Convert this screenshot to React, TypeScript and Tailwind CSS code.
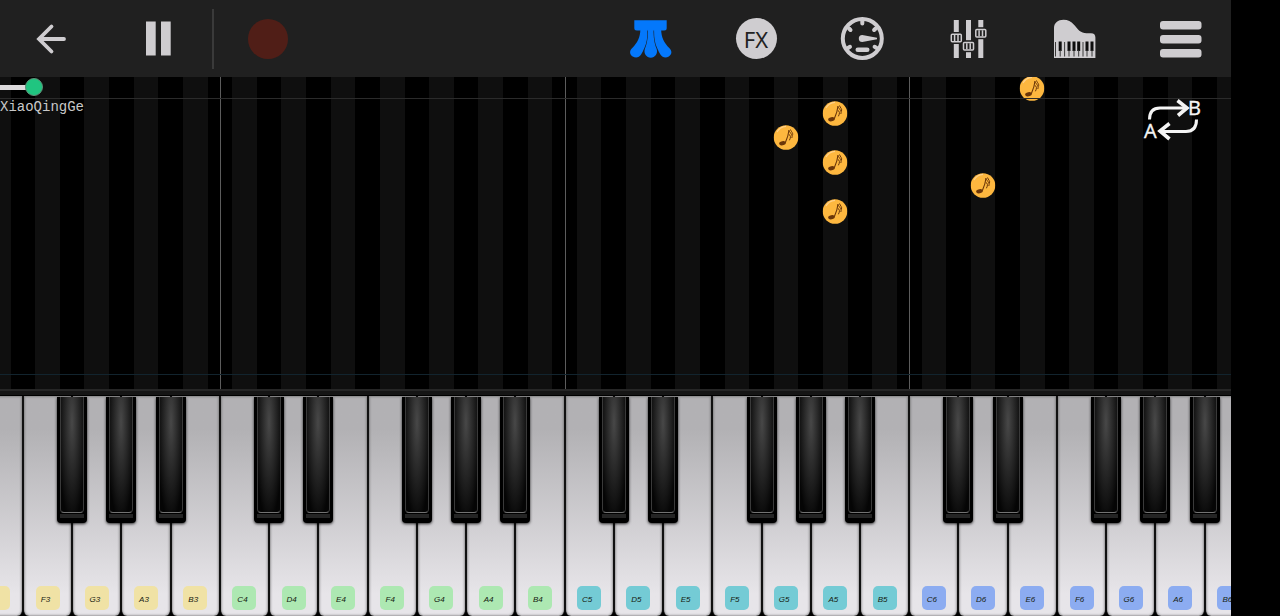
import { useState, type ReactNode } from 'react'

type Octave = 3 | 4 | 5 | 6

const BADGE_COLORS: Record<Octave, string> = {
  3: 'bg-[#f0e2a5]',
  4: 'bg-[#ade8b2]',
  5: 'bg-[#74cbd5]',
  6: 'bg-[#8cacf1]',
}

const LETTERS = ['C', 'D', 'E', 'F', 'G', 'A', 'B']
const HAS_SHARP_BEFORE = ['D', 'E', 'G', 'A', 'B']

const KEYS = ([3, 4, 5, 6] as Octave[])
  .flatMap((octave) => LETTERS.map((letter) => ({ letter, octave, name: `${letter}${octave}` })))
  .slice(2)

const FALLING_NOTES: Record<string, number[]> = {
  G5: [48],
  A5: [24, 73, 122],
  D6: [96],
  E6: [-1],
}

function ToolButton({ label, children }: { label: string; children: ReactNode }) {
  return (
    <button type="button" aria-label={label} className="flex size-11 shrink-0 items-center justify-center text-[#cfcdd0]">
      {children}
    </button>
  )
}

function BackIcon() {
  return (
    <svg viewBox="0 0 44 44" className="size-11" fill="none" stroke="currentColor" strokeWidth="3.800">
      <path d="M35 22H10.500M22.500 9.500 10 22l12.500 12.500" strokeLinecap="round" />
    </svg>
  )
}

function PauseIcon() {
  return (
    <svg viewBox="0 0 44 44" className="size-11" fill="currentColor">
      <path d="M11 4.500h9.700v34H11zM26 4.500h9.700v34H26z" />
    </svg>
  )
}

function PedalIcon() {
  return (
    <svg viewBox="0 0 44 44" className="size-11 text-[#0478fb]" fill="currentColor">
      <path d="M6.300 3.300h32.400v7.700q0 2.500-2.500 2.500H8.800q-2.500 0-2.500-2.500z" />
      <path d="M12.400 12h7c.2 8-.6 14-3 19-1.500 3-2 4.500-3.300 6.500-2 3.200-5.600 3.600-8.400 1.900-3.200-2-3.400-5.600-.7-8.200 5.600-5.500 8.100-10.400 8.400-19.200z" />
      <path d="M33.100 12h-7c-.2 8 .6 14 3 19 1.500 3 2 4.500 3.300 6.500 2 3.200 5.600 3.600 8.400 1.900 3.200-2 3.400-5.600.7-8.200-5.600-5.500-8.100-10.400-8.400-19.200z" />
      <path d="M20 12h5.500c0 9 .8 14 3 19.500 1.900 5-1.500 9.200-5.700 9.200s-7.700-4.200-5.800-9.200C19.200 26 20 21 20 12z" />
    </svg>
  )
}

function GaugeIcon() {
  return (
    <svg viewBox="0 0 44 44" className="size-11" fill="none" stroke="currentColor">
      <circle cx="22.300" cy="21.500" r="19.500" strokeWidth="4" />
      <path d="M22.300 3v3.500M9 11.500l1.500 1.500M35.600 11.500l-1.500 1.500M8 31l2-1.200M36.600 31l-2-1.200" strokeWidth="4" strokeLinecap="round" />
      <path d="M22.300 18 37 20.800v1.400L22.300 25a3.500 3.500 0 1 1 0-7z" fill="currentColor" stroke="none" />
      <path d="M17.800 32.800h9.400" strokeWidth="4.600" strokeLinecap="round" />
    </svg>
  )
}

function MixerIcon() {
  const faders = [
    { x: 10.3, y: 21 },
    { x: 22.5, y: 29.2 },
    { x: 34.8, y: 16.2 },
  ]
  return (
    <svg viewBox="0 0 44 44" className="size-11">
      {faders.map(({ x, y }) => (
        <g key={x}>
          <rect x={x - 2.5} y="3" width="5" height="38" fill="currentColor" />
          <rect x={x - 6.5} y={y - 6} width="13" height="12" fill="#202020" />
          <rect x={x - 5} y={y - 3.8} width="10" height="7.600" rx="1" fill="#202020" stroke="currentColor" strokeWidth="1.500" />
          <path d={`M${x - 1.7} ${y - 3}v6M${x + 1.7} ${y - 3}v6`} stroke="currentColor" strokeWidth="1.500" />
        </g>
      ))}
    </svg>
  )
}

function GrandPianoIcon() {
  return (
    <svg viewBox="0 0 44 44" className="size-11">
      <path d="M2 41V11C2 6 6 2.800 11.500 2.800c4.500 0 7.500 1.500 10.500 5 4.500 5.200 6.500 8.400 12.500 8.400H39c3 0 4.400 1.500 4.400 4.200V41z" fill="currentColor" />
      <path d="M6.700 24.500h3V34h-3zM15.500 24.500h3V34h-3zM20.500 24.500h3V34h-3zM25.200 24.500h3V34h-3zM33.500 24.500h3V34h-3zM38.500 24.500h3V34h-3z" fill="#0d0d0d" />
      <path d="M3.500 25v14.500M8.200 33v6.500M12.600 25v14.500M17 33v6.500M22 33v6.500M26.700 33v6.500M31 25v14.500M35 33v6.500M40 33v6.500" stroke="#3a3a3a" strokeWidth="1" />
    </svg>
  )
}

function MenuIcon() {
  return (
    <svg viewBox="0 0 44 44" className="size-11" fill="currentColor">
      <rect x="2" y="4" width="41.500" height="8.500" rx="3" />
      <rect x="2" y="18" width="41.500" height="8.500" rx="3" />
      <rect x="2" y="32" width="41.500" height="8.500" rx="3" />
    </svg>
  )
}

function LoopIcon() {
  return (
    <svg viewBox="0 0 60 44" className="h-11 w-[60px]" fill="none" stroke="#f4f4f4" strokeWidth="3">
      <path d="M6.500 22.500C6.500 14.500 10 11 17 11h26" />
      <path d="M34.500 3.500 44 11l-9 7.500" strokeWidth="3.600" />
      <path d="M53.500 22.500c0 8-3.500 12-10.500 12H17" />
      <path d="M26.500 26.500 17 34l9.500 8" strokeWidth="3.600" />
      <g fill="#f4f4f4" stroke="#f4f4f4" strokeWidth="0.400" fontFamily="Open Sans, sans-serif" fontSize="20">
        <text x="1" y="41">A</text>
        <text x="45" y="18">B</text>
      </g>
    </svg>
  )
}

function FallingNote({ top }: { top: number }) {
  return (
    <svg viewBox="0 0 25 25" className="absolute left-1/2 size-[25px] -translate-x-1/2" style={{ top }}>
      <circle cx="12.500" cy="12.500" r="12.300" fill="#fdb73f" />
      <path d="M3.500 7A10.800 10.800 0 0 1 12.500 1.300" fill="none" stroke="#ffd08a" strokeWidth="1.200" />
      <ellipse cx="9" cy="18.200" rx="3.400" ry="2.100" transform="rotate(-10 9 18.200)" fill="#6b3609" />
      <path d="M11.800 17.800C13.500 14 15 10 15.500 5" stroke="#6b3609" strokeWidth="1.100" fill="none" />
      <path d="M15.300 9.500c2 .6 2.200 2.800.6 5.800M15.500 5.500c.8 2.500 4.200 4 2.800 7.500M17 4.500c.5 2.200 3.200 3.500 1.800 6" stroke="#6b3609" strokeWidth="1" fill="none" />
    </svg>
  )
}

function BlackKey({ label }: { label: string }) {
  return (
    <button
      type="button"
      aria-label={label}
      className="absolute top-px -left-[15px] z-10 flex h-[126px] w-[30px] flex-col items-center rounded-b bg-black shadow-[0_1px_3px_rgba(0,0,0,0.8)]"
    >
      <span className="h-[116px] w-6 rounded-b-sm border-x border-b border-x-[#3a3a3a] border-b-[#737373] bg-[radial-gradient(ellipse_14px_100px_at_50%_22%,#484848,#202020_60%,#050505)]" />
      <span className="mt-px h-1 w-6 bg-[#242424]" />
    </button>
  )
}

function Toolbar() {
  return (
    <header className="flex h-[77px] shrink-0 items-center justify-between bg-[#202020] pr-[29px] pl-[29px]">
      <div className="flex items-center">
        <ToolButton label="Back"><BackIcon /></ToolButton>
        <span className="w-[62px]" />
        <ToolButton label="Pause"><PauseIcon /></ToolButton>
        <span className="ml-[33px] h-[60px] w-0.5 bg-[#3a3a3a]" />
        <span className="w-8" />
        <ToolButton label="Record">
          <span className="size-10 rounded-full bg-[#501e17]" />
        </ToolButton>
      </div>
      <nav className="flex items-center gap-[62px]">
        <ToolButton label="Pedal"><PedalIcon /></ToolButton>
        <ToolButton label="Effects">
          <span className="flex size-[41px] items-center justify-center rounded-full bg-[#cfcdd0] font-['Noto_Sans',sans-serif] text-[22px] leading-none text-[#222222]">
            FX
          </span>
        </ToolButton>
        <ToolButton label="Tempo"><GaugeIcon /></ToolButton>
        <ToolButton label="Mixer"><MixerIcon /></ToolButton>
        <ToolButton label="Instrument"><GrandPianoIcon /></ToolButton>
        <ToolButton label="Menu"><MenuIcon /></ToolButton>
      </nav>
    </header>
  )
}

function NoteRoll() {
  const [progress, setProgress] = useState(21)
  return (
    <main className="relative flex-1 overflow-hidden bg-black">
      <div className="absolute inset-y-0 -left-[2.14%] grid w-[104%] grid-cols-[repeat(26,minmax(0,1fr))]">
        {KEYS.map(({ name, letter }) => (
          <div key={name} className="relative">
            <div className="mx-auto h-full w-1/2 bg-[#0f0f0f]" />
            {letter === 'C' && <div className="absolute inset-y-0 left-0 w-px bg-[#5c5c5c]" />}
            {(FALLING_NOTES[name] ?? []).map((top) => <FallingNote key={top} top={top} />)}
          </div>
        ))}
      </div>
      <div className="absolute inset-x-0 top-[21px] h-px bg-[#2b2b2b]" />
      <div className="absolute inset-x-0 bottom-[14px] h-px bg-[#12242e]" />
      <div className="relative flex flex-col">
        <input
          type="range"
          aria-label="Song position"
          min={0}
          max={1000}
          value={progress}
          onChange={(event) => setProgress(Number(event.target.value))}
          className="h-5 w-full appearance-none bg-[linear-gradient(#dcdadc,#dcdadc)] bg-[position:left_center] bg-no-repeat [&::-webkit-slider-thumb]:size-[18px] [&::-webkit-slider-thumb]:appearance-none [&::-webkit-slider-thumb]:rounded-full [&::-webkit-slider-thumb]:border [&::-webkit-slider-thumb]:border-[#5f8f78] [&::-webkit-slider-thumb]:bg-[#20c580]"
          style={{ backgroundSize: `${progress / 10}% 5px` }}
        />
        <p className="font-['Liberation_Mono',monospace] text-[14px] leading-5 text-[#c8c8c8]">XiaoQingGe</p>
      </div>
      <button type="button" aria-label="Loop from A to B" className="absolute top-5 right-7">
        <LoopIcon />
      </button>
    </main>
  )
}

function Keyboard() {
  return (
    <footer className="shrink-0 overflow-hidden bg-black">
      <div className="h-[7px] border-t-2 border-b border-t-[#262626] border-b-black bg-[#151515]" />
      <div className="-ml-[2.14%] grid h-[220px] w-[104%] grid-cols-[repeat(26,minmax(0,1fr))]">
        {KEYS.map(({ name, letter, octave }, index) => (
          <div key={name} className="relative">
            {HAS_SHARP_BEFORE.includes(letter) && <BlackKey label={`${letter} flat ${octave}`} />}
            <button
              type="button"
              aria-label={name}
              className="flex h-full w-full flex-col items-center justify-end rounded-b-md border-x border-[#111111] bg-linear-to-b from-[#b2b1b4] from-15% to-[#e7e5e9] to-90% pb-[6px] shadow-[inset_0_0_2px_1px_rgba(90,90,90,0.5)]"
            >
              <span
                className={`flex size-6 items-center justify-center rounded-[5px] pt-1 pr-1 font-['Liberation_Sans',sans-serif] text-[8px] leading-none text-[#14200f] italic ${BADGE_COLORS[octave]}`}
              >
                {index > 0 && name}
              </span>
            </button>
          </div>
        ))}
      </div>
    </footer>
  )
}

export default function App() {
  return (
    <div className="min-h-screen bg-black pr-[49px]">
      <div className="flex min-h-screen flex-col overflow-hidden">
        <Toolbar />
        <NoteRoll />
        <Keyboard />
      </div>
    </div>
  )
}
